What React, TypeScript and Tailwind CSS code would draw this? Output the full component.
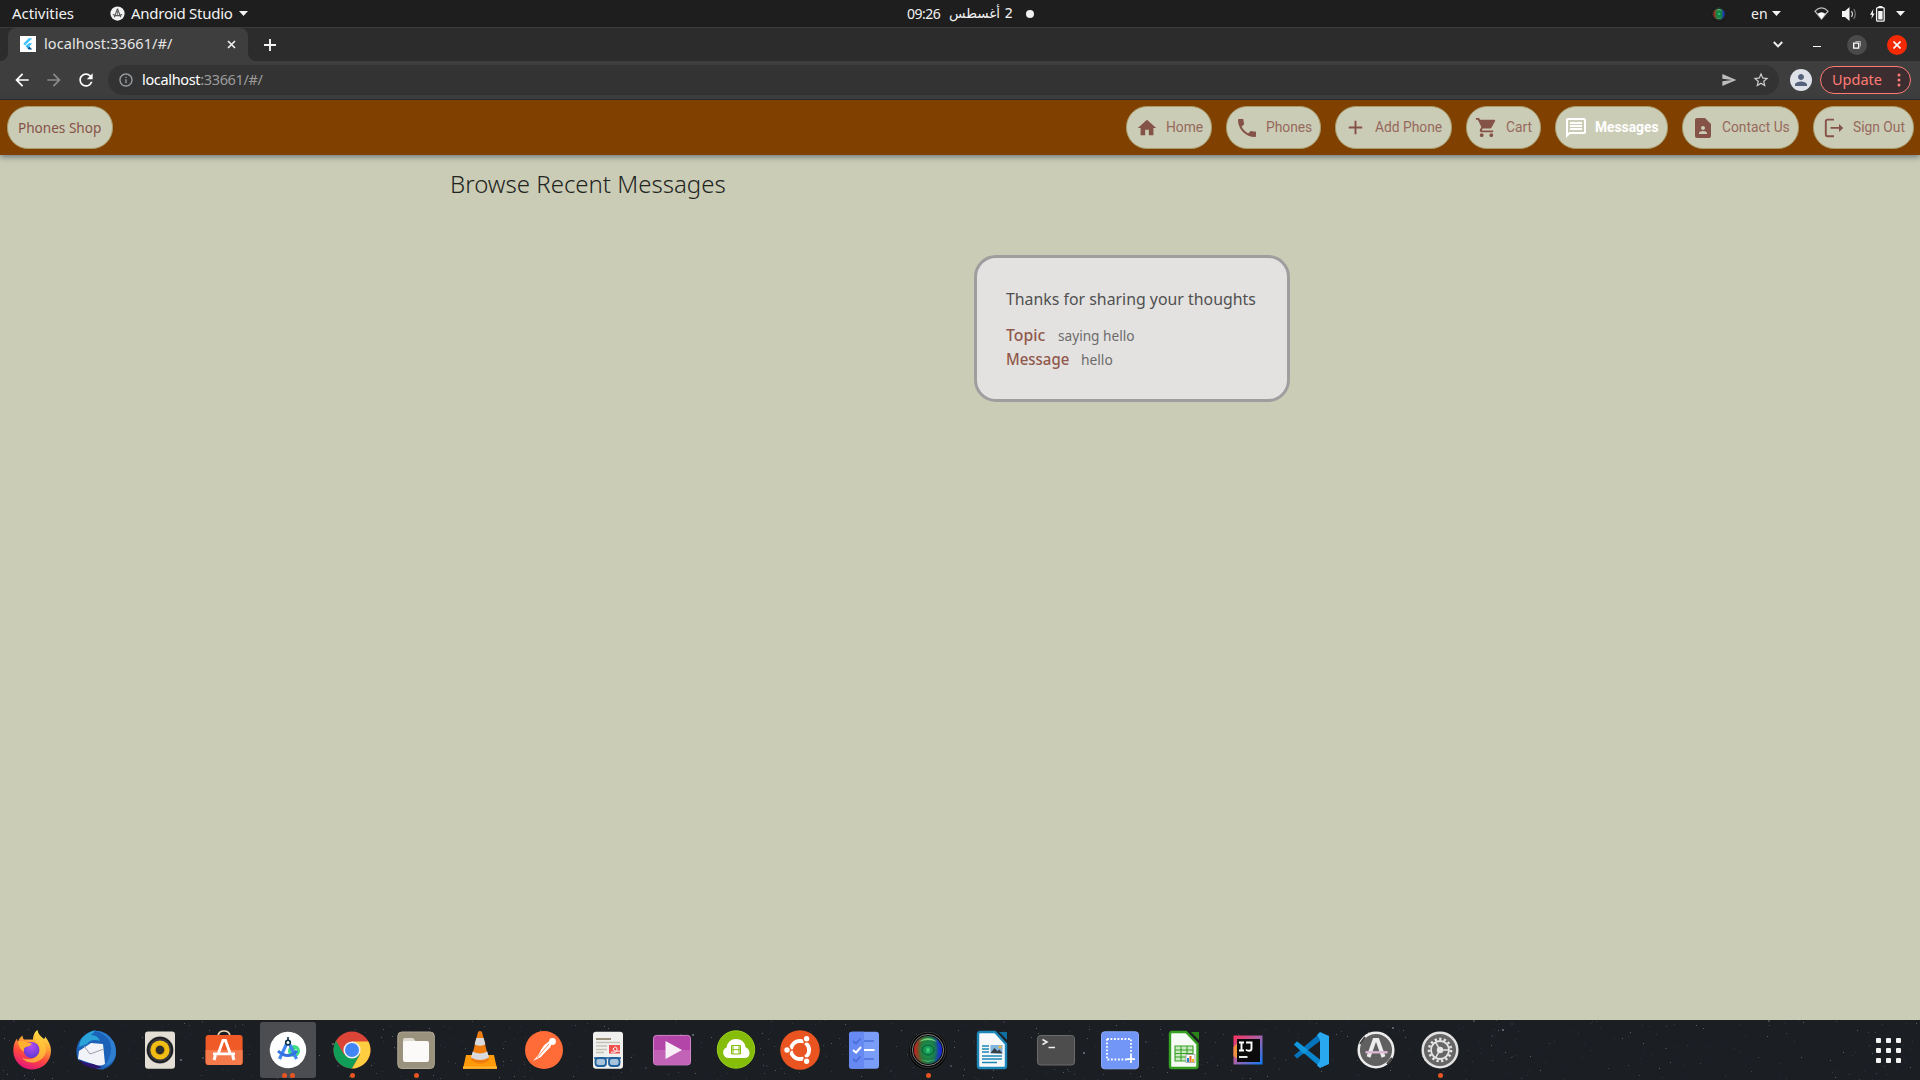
import type { ReactNode } from "react";
import {
  MdAdd,
  MdArrowBack,
  MdArrowForward,
  MdContactPage,
  MdHome,
  MdInfoOutline,
  MdOutlineMessage,
  MdPerson,
  MdPhone,
  MdRefresh,
  MdSend,
  MdShoppingCart,
  MdStarBorder,
} from "react-icons/md";

/* ---------- GNOME top bar ---------- */

const CaretDown = () => (
  <svg className="h-[5px] w-[9px]" viewBox="0 0 9 5">
    <path d="M0 0h9L4.5 5z" fill="#f2f2f2" />
  </svg>
);

const Lens = ({ className }: { className: string }) => (
  <svg className={className} viewBox="0 0 40 40">
    <defs>
      <radialGradient id="lensGlow" cx=".5" cy=".5" r=".5">
        <stop offset="0" stopColor="#4fe08a" />
        <stop offset=".25" stopColor="#129a55" />
        <stop offset=".6" stopColor="#1b8a45" stopOpacity=".8" />
        <stop offset="1" stopColor="#1b8a45" stopOpacity="0" />
      </radialGradient>
      <linearGradient id="lensHue" x1="0" x2="1">
        <stop offset="0" stopColor="#c8201a" />
        <stop offset=".3" stopColor="#3a6a34" />
        <stop offset=".7" stopColor="#176a5c" />
        <stop offset="1" stopColor="#1a22e8" />
      </linearGradient>
    </defs>
    <circle cx="20" cy="20.5" r="19" fill="#050505" />
    <circle cx="20" cy="20" r="17.8" fill="none" stroke="#4b4b4b" strokeWidth=".8" />
    <circle cx="20" cy="20" r="15.6" fill="#0b0b0b" stroke="#8a8a8a" strokeWidth=".9" />
    <circle cx="20" cy="20" r="14" fill="url(#lensHue)" />
    <ellipse cx="20" cy="20" rx="10.500" ry="14" fill="url(#lensGlow)" />
    <path d="M11 12a12.5 12.5 0 0 1 18 0q-9-4-18 0z" fill="#86e887" opacity=".8" />
    <path d="M12 29a12.5 12.5 0 0 0 16 0q-8 3-16 0z" fill="#49c86f" opacity=".7" />
    <ellipse cx="20" cy="20" rx="6" ry="5" fill="none" stroke="#0a5a3a" strokeWidth="1" />
  </svg>
);

function TopBar() {
  return (
    <header className="flex h-[27px] w-full shrink-0 items-center bg-[#1e1e1e] font-['Noto_Sans',sans-serif] text-[14px] leading-[27px] text-[#f2f2f2]">
      <div className="flex w-[907px] shrink-0 items-center">
        <span className="ml-3 w-[98px] text-[15px] tracking-[-0.05px]">Activities</span>
        <svg className="h-[15px] w-[15px]" viewBox="0 0 16 16">
          <circle cx="8" cy="8" r="7.6" fill="#f2f2f2" />
          <path d="M8 2.8L4.6 12M8 2.8L11.4 12M3 9q5 2.4 10 0" fill="none" stroke="#555" strokeWidth="1.2" />
          <path d="M8 5v5" stroke="#555" strokeWidth=".8" />
        </svg>
        <span className="ml-[6px] w-[108px] text-[15px] whitespace-nowrap tracking-[-0.25px]">Android Studio</span>
        <CaretDown />
      </div>
      <div className="flex items-center">
        <span className="w-[43px] tracking-[-0.5px]">09:26</span>
        <span dir="rtl" className="w-[63px] whitespace-nowrap text-start font-['DejaVu_Sans',sans-serif] text-[13.5px]">
          2 أغسطس
        </span>
        <span className="ml-[13px] h-2 w-2 rounded-full bg-[#f2f2f2]" />
      </div>
      <div className="ml-auto flex items-center">
        <Lens className="h-[16px] w-[16px]" />
        <span className="ml-[24px] w-[21px]">en</span>
        <CaretDown />
        <svg className="ml-[33px] h-[13px] w-[15px]" viewBox="0 0 15 13">
          <path d="M1 4.2Q7.5-2.4 14 4.2L7.5 12z" fill="none" stroke="#bbb" strokeWidth="1.2" />
          <path d="M3.6 6.8Q7.5 3.6 11.4 6.8L7.5 12z" fill="#fff" />
        </svg>
        <svg className="ml-[13px] h-[14px] w-[16px]" viewBox="0 0 16 14">
          <path d="M0 4h3l4.5-4v14L3 10H0z" fill="#f4f4f4" />
          <path d="M9.5 4q2 3 0 6" fill="none" stroke="#ccc" strokeWidth="1.2" />
          <path d="M11.8 2q3 5 0 10" fill="none" stroke="#777" strokeWidth="1.2" />
        </svg>
        <svg className="ml-[12px] h-[16px] w-[15px]" viewBox="0 0 15 16">
          <path d="M3.4 3L0 8.8h2L1.4 13 4.6 7.4H2.8z" fill="#f4f4f4" />
          <rect x="6.6" y="1.7" width="7.6" height="13.5" rx="1" fill="none" stroke="#f4f4f4" strokeWidth="1.3" />
          <path d="M8.4 0h4v1.6h-4zM8.2 5h4.4v8.6H8.2z" fill="#f4f4f4" />
        </svg>
        <span className="mr-[15px] ml-[11px] flex">
          <CaretDown />
        </span>
      </div>
    </header>
  );
}

/* ---------- Browser chrome ---------- */

function TabStrip() {
  return (
    <div className="flex h-[34px] w-full shrink-0 items-center border-t border-[#3c3c3c] bg-[#2c2c2c] font-['Noto_Sans',sans-serif]">
      <div className="flex h-full w-2 items-end bg-[#3e3e3e]">
        <span className="h-full w-2 rounded-br-lg bg-[#2c2c2c]" />
      </div>
      <div className="flex h-full w-[240px] items-center rounded-t-lg bg-[#3e3e3e] pb-px pl-3 text-[14.5px] text-[#e6e6e6]">
        <svg className="h-4 w-4" viewBox="0 0 16 16">
          <path d="M0 0h16v16H0z" fill="#fff" />
          <path d="M8.7 2.2h3.6L5 9.5 3.3 7.7z" fill="#40c4ff" />
          <path d="M8.7 7.3h3.6L9.3 10.4l-1.9-1.9z" fill="#40c4ff" />
          <path d="M5.6 10.3l1.8-1.8 1.9 1.9-1.8 1.8z" fill="#29b6f6" />
          <path d="M7.5 12.2l1.8-1.8 3 3H8.7z" fill="#01579b" />
        </svg>
        <span className="ml-[8px] w-[183px] pb-px tracking-[0.1px]">localhost:33661/#/</span>
        <svg className="h-[9px] w-[9px]" viewBox="0 0 9 9">
          <path d="M1 1l7 7M8 1L1 8" stroke="#eee" strokeWidth="1.7" />
        </svg>
      </div>
      <div className="h-full w-2 bg-[#3e3e3e]">
        <span className="block h-full w-2 rounded-bl-lg bg-[#2c2c2c]" />
      </div>
      <svg className="ml-2 h-3 w-3" viewBox="0 0 12 12">
        <path d="M6 0v12M0 6h12" stroke="#f4f4f4" strokeWidth="1.9" />
      </svg>
      <div className="mr-[13px] ml-auto flex items-center">
        <svg className="h-[7px] w-[10px]" viewBox="0 0 10 7">
          <path d="M.8 1L5 5.4 9.2 1" fill="none" stroke="#f0f0f0" strokeWidth="2" />
        </svg>
        <span className="mt-[4px] ml-[30px] h-px w-2 bg-white" />
        <span className="ml-[26px] flex h-5 w-5 items-center justify-center rounded-full bg-[#4a4a4a]">
          <svg className="h-2 w-2" viewBox="0 0 8 8">
            <path d="M.7 2.2h5v5h-5z" fill="none" stroke="#fff" strokeWidth="1.3" />
            <path d="M2.4.5h5.1v5" fill="none" stroke="#aaa" />
          </svg>
        </span>
        <span className="ml-5 flex h-5 w-5 items-center justify-center rounded-full bg-[#f52a05]">
          <svg className="h-2 w-2" viewBox="0 0 8 8">
            <path d="M.5.5l7 7M7.5.5l-7 7" stroke="#fff" strokeWidth="1.6" />
          </svg>
        </span>
      </div>
    </div>
  );
}

function Toolbar() {
  return (
    <div className="flex h-[39px] w-full shrink-0 items-center border-b border-[#272727] bg-[#3e3e3e] font-['Noto_Sans',sans-serif]">
      <MdArrowBack className="ml-3 h-5 w-5 text-white" />
      <MdArrowForward className="ml-3 h-5 w-5 text-[#8b8b8b]" />
      <MdRefresh className="ml-3 h-5 w-5 text-white" />
      <div className="ml-3 flex h-[30px] w-[1671px] items-center rounded-full bg-[#333]">
        <MdInfoOutline className="ml-[10px] h-4 w-4 text-[#9aa0a6]" />
        <span className="ml-[8px] text-[14.5px] tracking-[-0.34px] text-[#9b9b9b]">
          <span className="text-white">localhost</span>:33661/#/
        </span>
        <MdSend className="ml-auto h-4 w-4 text-[#bdbdbd]" />
        <MdStarBorder className="mr-[9px] ml-[15px] h-[18px] w-[18px] text-[#cfcfcf]" />
      </div>
      <span className="ml-[11px] flex h-[22px] w-[22px] items-center justify-center rounded-full bg-[#dfe1e8]">
        <MdPerson className="h-[18px] w-[18px] text-[#56617c]" />
      </span>
      <div className="ml-2 flex h-7 w-[91px] items-center rounded-full border border-[#ff7b74] bg-[#3c2e30] text-[14.5px] text-[#ff7b74]">
        <span className="ml-[11px] w-[65px]">Update</span>
        <svg className="h-[14px] w-[4px]" viewBox="0 0 4 14">
          <circle cx="2" cy="2" r="1.5" fill="#ff7b74" />
          <circle cx="2" cy="7" r="1.5" fill="#ff7b74" />
          <circle cx="2" cy="12" r="1.5" fill="#ff7b74" />
        </svg>
      </div>
    </div>
  );
}

/* ---------- Shop page ---------- */

const SignOutIcon = () => (
  <svg className="h-[22px] w-[22px]" viewBox="0 0 22 22">
    <path d="M11 2.6H4.5A1.7 1.7 0 0 0 2.8 4.300V17.500A1.700 1.700 0 0 0 4.500 19.200H11" fill="none" stroke="currentColor" strokeWidth="1.9" />
    <path d="M7.500 10h8.500V6.900l4.200 4-4.200 4V11.800H7.500z" fill="currentColor" />
  </svg>
);

interface NavItemProps {
  width: string;
  label: string;
  icon: ReactNode;
  active?: boolean;
}

function NavItem({ width, label, icon, active }: NavItemProps) {
  return (
    <div className={`${width} flex h-[43px] shrink-0 items-center rounded-[21px] border border-[#a99b6c] bg-[#cbccb5] pl-[7.5px] ${active ? "text-white" : "text-[#855248]"}`}>
      <span className="flex w-6 shrink-0 justify-center">{icon}</span>
      <span
        className={`ml-[7.5px] origin-left scale-x-[0.92] whitespace-nowrap text-[15px] ${active ? "font-bold" : "text-[#96695d]"}`}
      >
        {label}
      </span>
    </div>
  );
}

function AppBar() {
  return (
    <nav className="z-10 flex h-[55px] w-full shrink-0 items-center bg-[#804000] pr-[6px] pl-[7px] font-[Roboto,sans-serif] shadow-[0_2px_6px_rgba(40,65,85,0.6)]">
      <div className="flex h-[43px] w-[106px] items-center rounded-[21px] border border-[#a99b6c] bg-[#cbccb5] pl-[10px]">
        <span className="origin-left whitespace-nowrap font-['Noto_Sans',sans-serif] text-[15px] text-[#855248] scale-x-[0.905]">Phones Shop</span>
      </div>
      <div className="ml-auto flex items-center gap-[14px]">
        <NavItem width="w-[86px]" label="Home" icon={<MdHome className="h-[22px] w-[22px]" />} />
        <NavItem width="w-[95px]" label="Phones" icon={<MdPhone className="h-6 w-6" />} />
        <NavItem width="w-[117px]" label="Add Phone" icon={<MdAdd className="h-[23px] w-[23px]" />} />
        <NavItem width="w-[75px]" label="Cart" icon={<MdShoppingCart className="h-[23px] w-[23px]" />} />
        <NavItem width="w-[113px]" label="Messages" active icon={<MdOutlineMessage className="h-6 w-6" />} />
        <NavItem width="w-[117px]" label="Contact Us" icon={<MdContactPage className="h-6 w-6" />} />
        <NavItem width="w-[101px]" label="Sign Out" icon={<SignOutIcon />} />
      </div>
    </nav>
  );
}

function MessagesPage() {
  return (
    <main className="w-full flex-1 bg-[#cbccb5] font-['Noto_Sans',sans-serif]">
      <h1 className="ml-[450px] h-[100px] pt-[11px] text-[24px] leading-[36px] font-light whitespace-nowrap text-[#22241f]">
        Browse Recent Messages
      </h1>
      <section className="ml-[974px] h-[147px] w-[316px] rounded-[22px] border-[3px] border-[#9f9e9f] bg-[#e3e2e0] pt-[29px] pl-[29px] whitespace-nowrap">
        <p className="origin-left scale-x-[0.933] text-[17px] leading-[24px] text-[#505050]">Thanks for sharing your thoughts</p>
        <div className="mt-[12px] flex h-6 items-center">
          <span className="w-[52px] origin-left scale-x-[0.93] text-[17px] font-medium text-[#90584b]">Topic</span>
          <span className="origin-left scale-x-[0.91] text-[15px] text-[#6c6c6c]">saying hello</span>
        </div>
        <div className="flex h-6 items-center">
          <span className="w-[75px] origin-left scale-x-[0.88] text-[17px] font-medium text-[#90584b]">Message</span>
          <span className="origin-left scale-x-[0.92] text-[15px] text-[#6c6c6c]">hello</span>
        </div>
      </section>
    </main>
  );
}

/* ---------- Dock ---------- */

const Firefox = () => (
  <>
    <defs>
      <linearGradient id="ffBody" x1=".75" y1="0" x2=".35" y2="1">
        <stop offset="0" stopColor="#fff44f" />
        <stop offset=".35" stopColor="#ffa436" />
        <stop offset=".65" stopColor="#ff4a3d" />
        <stop offset="1" stopColor="#e3157b" />
      </linearGradient>
      <radialGradient id="ffGlobe" cx=".5" cy=".3" r=".7">
        <stop offset="0" stopColor="#b54af5" />
        <stop offset="1" stopColor="#5c3bd0" />
      </radialGradient>
    </defs>
    <path d="M25.500 0c.5 4 3 6 6.500 9 1-.5 1-2 1-2.500 3.500 4 6 9 6 14A18.700 18.700 0 0 1 1.300 21c0-5 1-9 3.700-12.500.200 1.500.5 2.500 1 3 1-3 2.500-4.500 4.500-6 0 1.500.5 3 1.500 4h9c0-4 2-8 4.500-9.500z" fill="url(#ffBody)" />
    <circle cx="19.500" cy="20" r="8" fill="url(#ffGlobe)" />
    <path d="M6 11.500q6-2 9 1.300 3-.5 5 1.200-2 2.500-6 3-3 1-2 5-5-3-6-10.500z" fill="#ffb02e" />
    <path d="M25 3q9 9 9 18a14 14 0 0 1-24 7q11 4 16.500-4Q30 17 23 11q-1-4 2-8z" fill="#ffcb3a" opacity=".75" />
  </>
);

const Thunderbird = () => (
  <>
    <path d="M17 1q8-1 15 4 9 8 8 20-2 11-13 14.500-5 .5-9-2L2 30Q-2 19 4 10 9 3 17 1z" fill="#1b62b8" />
    <path d="M17 1q12 1 17 11 4 12-6 25 12-5 12-15 0-12-10-18Q23 0 17 1z" fill="#2f7fd0" />
    <path d="M3 17Q4 6 14 2l5-2q-1 3-4 5 7 0 9 6-9-3-13 3z" fill="#2aa3d9" />
    <path d="M3 21l12-8 12 1 2 20q-5 3-12 0L2 29z" fill="#f2f3f8" />
    <path d="M8 16l6 8 14-5" fill="none" stroke="#9c9ea8" />
    <path d="M3 29q4 4 14 5l9 3q-6 3-13 0-7-2-10-8z" fill="#2c1470" />
  </>
);

const Rhythmbox = () => (
  <>
    <rect x="5" y="1.600" width="30" height="37.200" rx="3" fill="#e3dfd5" />
    <circle cx="20" cy="20" r="13.400" fill="#34363c" />
    <circle cx="20" cy="20" r="12.300" fill="none" stroke="#111" strokeWidth="1" />
    <circle cx="20" cy="20" r="9.600" fill="#f1bd14" />
    <circle cx="20" cy="20" r="5" fill="#c79400" />
    <circle cx="20" cy="20" r="4.200" fill="#2d2d2d" />
  </>
);

const Software = () => (
  <>
    <path d="M14 6q.5-5 6-5t6 5" fill="none" stroke="#efd9b8" strokeWidth="1.700" />
    <rect x="1.600" y="5" width="37" height="30" rx="3" fill="#f05a26" />
    <path d="M1.600 20h37v12a3 3 0 0 1-3 3h-31a3 3 0 0 1-3-3z" fill="#f4794b" />
    <path d="M14.500 23L19 10.500h2.500L26 23M9 23.800h22" fill="none" stroke="#fff" strokeWidth="2.800" />
    <path d="M11.500 25l-1.500 5M28.500 25l1.500 5" stroke="#fff" strokeWidth="3" />
  </>
);

const AndroidStudio = () => (
  <>
    <circle cx="20" cy="20" r="17" fill="#fff" stroke="#fff" strokeWidth="2.500" strokeDasharray="5.340 1.780" strokeLinecap="round" />
    <circle cx="26" cy="21" r="6" fill="#3ddc84" />
    <circle cx="28" cy="20" r=".8" fill="#fff" />
    <path d="M19 13L11.500 29M21 13l7.500 16" stroke="#4285f4" strokeWidth="3.200" />
    <path d="M10 21q10 9 19 0" fill="none" stroke="#3372df" strokeWidth="3" />
    <circle cx="20" cy="12.500" r="2.300" fill="#fff" stroke="#073042" strokeWidth="1.600" />
    <path d="M20 7v4" stroke="#073042" strokeWidth="1.600" />
  </>
);

const Chrome = () => (
  <>
    <circle cx="20" cy="20" r="18.500" fill="#db4437" />
    <path d="M4 10.750A18.500 18.500 0 0 0 20 38.500L28 24.600 20 20 12 24.600z" fill="#0f9d58" />
    <path d="M20 11.500h16.400A18.500 18.500 0 0 1 20 38.500L28 24.600z" fill="#ffcd40" />
    <circle cx="20" cy="20" r="8.600" fill="#f1f1f1" />
    <circle cx="20" cy="20" r="7" fill="#4285f4" />
  </>
);

const Files = () => (
  <>
    <rect x="1.800" y="2" width="36.500" height="36.500" rx="4" fill="#9a927d" stroke="#b0a894" />
    <path d="M7 10q0-2 2-2h8l2.500 3h12l-1 7H7z" fill="#dfdacf" />
    <rect x="7" y="11" width="26" height="21" rx="2" fill="#fbfaf8" />
  </>
);

const Vlc = () => (
  <>
    <path d="M6 25h28l3 13.800H3z" fill="#ff9a0a" />
    <path d="M3 36.500h34v2.300H3z" fill="#ffb52e" />
    <path d="M11 30l7-28q2-2 4 0l7 28q-8 7-18 0z" fill="#f07c0e" />
    <path d="M16.300 8h7.400l1.700 6.300q-5.400 3-10.800 0zM12.700 21.500q7.300 4 14.600 0L29 27.500q-9 5-18 0z" fill="#d9dadd" />
  </>
);

const Postman = () => (
  <>
    <circle cx="20" cy="20" r="19" fill="#ff6c37" />
    <circle cx="28.500" cy="11.500" r="3.400" fill="#fff" />
    <path d="M25.500 11q-5 3-8 8l-3 6 1 1 5-3 6-6 1-4z" fill="#fff" />
    <path d="M17 22l-8 9 8-4 6-7" fill="#fff" />
    <path d="M25 14l-12 14" stroke="#ff6c37" strokeWidth=".8" />
  </>
);

const DocViewer = () => (
  <>
    <rect x="5" y="1.800" width="30" height="37" rx="3" fill="#f0f0ee" />
    <path d="M8 9h15" stroke="#9a927d" strokeWidth="2" />
    <path d="M8 12.500h24M8 16h11M8 19.500h11M8 22.500h8" stroke="#c5c1b4" strokeWidth="1.300" />
    <path d="M21 15h11v8.500H21z" fill="#f0514f" />
    <path d="M23 22q7 1 6-3t-4 0q1 3 7 2" fill="none" stroke="#fff" />
    <rect x="7.500" y="28" width="10.500" height="8" rx="3" fill="#a8c4dc" stroke="#21619c" strokeWidth="1.800" />
    <rect x="21" y="28" width="10.500" height="8" rx="3" fill="#a8c4dc" stroke="#21619c" strokeWidth="1.800" />
    <path d="M6 28h27" stroke="#21619c" strokeWidth="1.600" />
  </>
);

const Videos = () => (
  <>
    <rect x="1.500" y="5.400" width="37" height="29.500" rx="3" fill="#b445a8" stroke="#d287ca" />
    <path d="M2 20h36v12q0 2.500-2.500 2.500h-31Q2 34.500 2 32z" fill="#c263b8" />
    <path d="M13.500 11L30 20l-16.500 9z" fill="#f7eef6" />
  </>
);

const CloudDisk = () => (
  <>
    <circle cx="20" cy="19.500" r="18.700" fill="#86bd0b" stroke="#9ad31c" />
    <path d="M12 28a5.500 5.500 0 0 1-1.500-10.500Q12 9 20 9t9.500 8Q33.500 19 33.500 23q0 5-5 5z" fill="#fff" />
    <path d="M15.500 15.500h9v8.500h-9zM15.500 19.700h9M17 15.500v8.500M23 15.500v8.500" fill="none" stroke="#86bd0b" strokeWidth="1" />
  </>
);

const Ubuntu = () => (
  <>
    <circle cx="20" cy="20" r="19.800" fill="#e95420" />
    <circle cx="20" cy="20" r="9" fill="none" stroke="#fff" strokeWidth="4" />
    <path d="M20 20L8 20M20 20l6.500-11M20 20l6.500 11" stroke="#e95420" strokeWidth="1.500" />
    <g fill="#fff" stroke="#e95420" strokeWidth="1.200">
      <circle cx="7" cy="20" r="3.300" />
      <circle cx="26.600" cy="8.800" r="3.300" />
      <circle cx="26.600" cy="31.200" r="3.300" />
    </g>
    <circle cx="20" cy="20" r="7" fill="#e95420" />
  </>
);

const Todo = () => (
  <>
    <rect x="5" y="1.800" width="30" height="37" rx="3" fill="#7a9df8" />
    <path d="M8 1.800h12v37H8a3 3 0 0 1-3-3v-31a3 3 0 0 1 3-3z" fill="#668af2" />
    <path d="M9 11l3 2.500 4.500-5M9 29l3 2.500 4.500-5M20 11h10M20 29h10" fill="none" stroke="#4a6fd8" strokeWidth="1.700" />
    <path d="M9 20l3 2.500 5-5.500M20 20h10.500" fill="none" stroke="#fff" strokeWidth="2" />
  </>
);

const Writer = () => (
  <>
    <path d="M8 2h15l11 12v22q0 2-2 2H8q-2 0-2-2V4q0-2 2-2z" fill="#f6f8fa" stroke="#1d86b8" strokeWidth="2.400" />
    <path d="M27 2h8v8z" fill="#106e9e" />
    <path d="M10 16h7M10 19h7M10 22h7M10 26h20M10 29h20M10 32.500h15" stroke="#1d86b8" strokeWidth="1.500" />
    <path d="M18.500 15h12v8.500h-12z" fill="#7fb4dc" />
    <path d="M18.500 23l4-5 3 3 2-1.500 3 4z" fill="#3a3f46" />
    <circle cx="28" cy="17" r="1.500" fill="#f6b93b" />
  </>
);

const Terminal = () => (
  <>
    <rect x="1.500" y="5.500" width="37" height="29.500" rx="3" fill="#4d4d4d" stroke="#6b6b6b" />
    <path d="M6.500 9.500L11 12l-4.500 2.500M12.500 17.500h6.500" fill="none" stroke="#f0f0f0" strokeWidth="1.500" />
  </>
);

const Screenshot = () => (
  <>
    <rect x="1.500" y="1.800" width="37" height="37" rx="3" fill="#7196f7" stroke="#89a8fa" />
    <path d="M7 9h24v21M7 9v20.500h22" fill="none" stroke="#fff" strokeWidth="1.800" strokeDasharray="1.800 1.700" />
    <path d="M31 25v8M27 29.200h8" stroke="#fff" strokeWidth="1.700" />
  </>
);

const Calc = () => (
  <>
    <path d="M8 2h14l11.500 12v22q0 2-2 2H8q-2 0-2-2V4q0-2 2-2z" fill="#f6faf4" stroke="#35a022" strokeWidth="2.400" />
    <path d="M27 2h8v8z" fill="#2a8319" />
    <path d="M11 16h18v15H11zM11 20h18M11 23.500h18M11 27h18M17 16v15M23 16v15" fill="#cdeac4" stroke="#35a022" strokeWidth="1.100" />
    <path d="M22 24.500h9v8h-9z" fill="#fff" stroke="#999" strokeWidth=".8" />
    <path d="M23 28h2v4h-2z" fill="#2487d8" />
    <path d="M25.500 26h2v6h-2z" fill="#e86a20" />
    <path d="M28 29h2v3h-2z" fill="#f0b51e" />
  </>
);

const IntelliJ = () => (
  <>
    <defs>
      <linearGradient id="ijFrame" x1="0" x2="1" y1="0" y2="1">
        <stop offset="0" stopColor="#fe315d" />
        <stop offset=".45" stopColor="#b05fa4" />
        <stop offset="1" stopColor="#087cfa" />
      </linearGradient>
    </defs>
    <path d="M5.500 5.500h29v29h-29z" fill="url(#ijFrame)" />
    <path d="M5.500 17l4-4v16l-4-3z" fill="#f0923c" />
    <path d="M9 9h23v23H9z" fill="#0b0b0b" />
    <path d="M11 12.500h5M13.500 12.500v8M11 20.500h5M18 12.500h5.500v6q0 2.300-2.500 2.300-2 0-3-1.300" fill="none" stroke="#fff" strokeWidth="1.900" />
    <path d="M11 27h8.500" stroke="#fff" strokeWidth="1.800" />
  </>
);

const VsCode = () => (
  <>
    <path d="M2 14.500L5 11.500 28 29.500V37z" fill="#0a87cf" />
    <path d="M2 25.500L5 28.500 28 11V3z" fill="#0674bd" />
    <path d="M2 14.500L5 11.500 16 20l-4 4z" fill="#1297dd" />
    <path d="M28 2l9 4v28l-9 4-3-2.500 3-5V10l-3-5z" fill="#29a8f0" />
  </>
);

const Updater = () => (
  <>
    <circle cx="20" cy="20" r="17.300" fill="#606060" stroke="#ececec" strokeWidth="2.500" />
    <path d="M4 14L9 7M31 34l5-6" stroke="#444" strokeWidth="2" />
    <path d="M12.500 27L18.500 10h3l6 17" fill="none" stroke="#ededed" strokeWidth="4" />
    <path d="M9.500 22.300h22" stroke="#d9b8d3" strokeWidth="2.400" />
  </>
);

const Settings = () => (
  <>
    <circle cx="20" cy="20" r="17.300" fill="#666" stroke="#e2e2e2" strokeWidth="2.500" />
    <circle cx="20" cy="20" r="11" fill="none" stroke="#e6e6e6" strokeWidth="2.600" strokeDasharray="2.300 2.307" />
    <circle cx="20" cy="20" r="9" fill="none" stroke="#e6e6e6" strokeWidth="1.800" />
    <path d="M20 20h9M20 20l-4.500-7.800M20 20l-4.500 7.800" stroke="#e6e6e6" strokeWidth="1.500" />
    <circle cx="20" cy="20" r="3.200" fill="#e6e6e6" />
  </>
);

interface DockApp {
  name: string;
  art: ReactNode;
  windows?: number;
  focused?: boolean;
}

const dockApps: DockApp[] = [
  { name: "Firefox", art: <Firefox /> },
  { name: "Thunderbird", art: <Thunderbird /> },
  { name: "Rhythmbox", art: <Rhythmbox /> },
  { name: "Software", art: <Software /> },
  { name: "Android Studio", art: <AndroidStudio />, windows: 2, focused: true },
  { name: "Chrome", art: <Chrome />, windows: 1 },
  { name: "Files", art: <Files />, windows: 1 },
  { name: "VLC", art: <Vlc /> },
  { name: "Postman", art: <Postman /> },
  { name: "Document Viewer", art: <DocViewer /> },
  { name: "Videos", art: <Videos /> },
  { name: "Cloud", art: <CloudDisk /> },
  { name: "Ubuntu", art: <Ubuntu /> },
  { name: "To Do", art: <Todo /> },
  { name: "Camera", art: null, windows: 1 },
  { name: "Writer", art: <Writer /> },
  { name: "Terminal", art: <Terminal /> },
  { name: "Screenshot", art: <Screenshot /> },
  { name: "Calc", art: <Calc /> },
  { name: "IntelliJ", art: <IntelliJ /> },
  { name: "VS Code", art: <VsCode /> },
  { name: "Updater", art: <Updater /> },
  { name: "Settings", art: <Settings />, windows: 1 },
];

const starTones = ["#34383e", "#41464c", "#2d3238", "#5b6066", "#30293c"];

const stars = Array.from({ length: 620 }, (_, i) => {
  const a = Math.sin(i * 12.9898 + 4.1) * 43758.5453;
  const b = Math.sin(i * 78.233 + 1.7) * 24634.6345;
  return {
    x: Math.floor((a - Math.floor(a)) * 1920),
    y: Math.floor((b - Math.floor(b)) * 60),
    tone: starTones[i % starTones.length],
    size: i % 23 === 0 ? 2 : 1,
  };
});

function Dock() {
  return (
    <footer className="relative flex h-[60px] w-full shrink-0 items-center bg-[#1b1e22]">
      <svg className="absolute inset-0 h-[60px] w-[1920px]" viewBox="0 0 1920 60">
        {stars.map((s, i) => (
          <rect key={i} x={s.x} y={s.y} width={s.size} height={s.size} fill={s.tone} />
        ))}
      </svg>
      {dockApps.map((app) => (
        <div key={app.name} className="relative flex h-[60px] w-16 shrink-0 items-center justify-center">
          <div className={`flex h-14 w-14 items-center justify-center rounded-[3px] ${app.focused ? "bg-[#4b4d50]" : ""}`}>
            {app.art ? (
              <svg className="h-10 w-10" viewBox="0 0 40 40">
                {app.art}
              </svg>
            ) : (
              <Lens className="h-10 w-10" />
            )}
          </div>
          {app.windows ? (
            <div className="absolute bottom-[2px] left-0 flex w-full justify-center gap-[3px]">
              {Array.from({ length: app.windows }, (_, i) => (
                <span key={i} className="h-[5px] w-[5px] rounded-full bg-[#e95420]" />
              ))}
            </div>
          ) : null}
        </div>
      ))}
      <div className="relative mr-[19px] ml-auto grid grid-cols-3 gap-[5px]">
        {Array.from({ length: 9 }, (_, i) => (
          <span key={i} className="h-[5px] w-[5px] rounded-[1px] bg-[#f3f3f3]" />
        ))}
      </div>
    </footer>
  );
}

export default function App() {
  return (
    <div className="flex h-[1080px] w-[1920px] flex-col overflow-hidden">
      <TopBar />
      <TabStrip />
      <Toolbar />
      <AppBar />
      <MessagesPage />
      <Dock />
    </div>
  );
}
